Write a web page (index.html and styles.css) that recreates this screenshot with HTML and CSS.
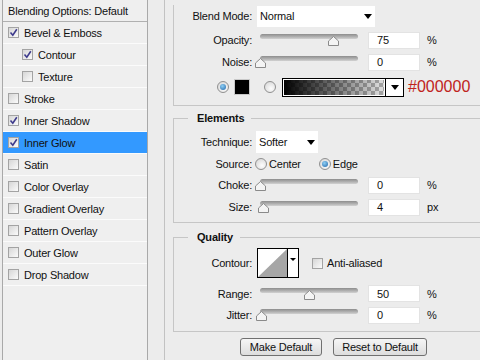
FILE: index.html
```html
<!DOCTYPE html>
<html lang="en">
<head>
    <meta charset="UTF-8">
    <title>Layer Style - Inner Glow</title>
    <link rel="stylesheet" href="styles.css">
</head>
<body>
    <div class="dialog">
        <ul class="styles-list">
            <li class="list-head">Blending Options: Default</li>
            <li><span class="check on"><svg viewBox="0 0 9 9"><path d="M1.5 4.5 L3.8 7.2 L7.8 1.2"/></svg></span>Bevel &amp; Emboss</li>
            <li class="sub"><span class="check on"><svg viewBox="0 0 9 9"><path d="M1.5 4.5 L3.8 7.2 L7.8 1.2"/></svg></span>Contour</li>
            <li class="sub"><span class="check"></span>Texture</li>
            <li><span class="check"></span>Stroke</li>
            <li><span class="check on"><svg viewBox="0 0 9 9"><path d="M1.5 4.5 L3.8 7.2 L7.8 1.2"/></svg></span>Inner Shadow</li>
            <li class="selected"><span class="check on"><svg viewBox="0 0 9 9"><path d="M1.5 4.5 L3.8 7.2 L7.8 1.2"/></svg></span>Inner Glow</li>
            <li><span class="check"></span>Satin</li>
            <li><span class="check"></span>Color Overlay</li>
            <li><span class="check"></span>Gradient Overlay</li>
            <li><span class="check"></span>Pattern Overlay</li>
            <li><span class="check"></span>Outer Glow</li>
            <li><span class="check"></span>Drop Shadow</li>
        </ul>

        <div class="pane">
            <!-- Structure (top is scrolled off) -->
            <div class="group group-top">
                <div class="row row-blend">
                    <span class="label">Blend Mode:</span>
                    <div class="select select-blend"><span>Normal</span><i class="arrow"></i></div>
                </div>
                <div class="row row-opacity">
                    <span class="label">Opacity:</span>
                    <div class="slider">
                        <div class="track"></div>
                        <svg class="thumb" style="left: calc(75% - 5.5px)" viewBox="0 0 11 10"><polygon points="0.5,9.5 0.5,5 5.5,0.5 10.5,5 10.5,9.5"/></svg>
                    </div>
                    <div class="num">75</div>
                    <span class="unit">%</span>
                </div>
                <div class="row">
                    <span class="label">Noise:</span>
                    <div class="slider">
                        <div class="track"></div>
                        <svg class="thumb" style="left: calc(0% - 5.5px)" viewBox="0 0 11 10"><polygon points="0.5,9.5 0.5,5 5.5,0.5 10.5,5 10.5,9.5"/></svg>
                    </div>
                    <div class="num">0</div>
                    <span class="unit">%</span>
                </div>
                <div class="row row-color">
                    <span class="radio on"></span>
                    <span class="swatch"></span>
                    <span class="radio radio-grad"></span>
                    <div class="gradient"></div>
                    <div class="grad-arrow"><i class="arrow"></i></div>
                    <span class="hex">#000000</span>
                </div>
            </div>

            <fieldset class="group group-elements">
                <legend>Elements</legend>
                <div class="row">
                    <span class="label">Technique:</span>
                    <div class="select select-tech"><span>Softer</span><i class="arrow"></i></div>
                </div>
                <div class="row row-source">
                    <span class="label">Source:</span>
                    <span class="radio"></span><span class="opt">Center</span>
                    <span class="radio on radio-edge"></span><span class="opt">Edge</span>
                </div>
                <div class="row">
                    <span class="label">Choke:</span>
                    <div class="slider">
                        <div class="track"></div>
                        <svg class="thumb" style="left: calc(0% - 5.5px)" viewBox="0 0 11 10"><polygon points="0.5,9.5 0.5,5 5.5,0.5 10.5,5 10.5,9.5"/></svg>
                    </div>
                    <div class="num">0</div>
                    <span class="unit">%</span>
                </div>
                <div class="row">
                    <span class="label">Size:</span>
                    <div class="slider">
                        <div class="track"></div>
                        <svg class="thumb" style="left: calc(4% - 5.5px)" viewBox="0 0 11 10"><polygon points="0.5,9.5 0.5,5 5.5,0.5 10.5,5 10.5,9.5"/></svg>
                    </div>
                    <div class="num">4</div>
                    <span class="unit">px</span>
                </div>
            </fieldset>

            <fieldset class="group group-quality">
                <legend>Quality</legend>
                <div class="row row-contour">
                    <span class="label">Contour:</span>
                    <div class="contour">
                        <svg class="curve" viewBox="0 0 29 28"><polygon points="0,28 29,0 29,28"/></svg>
                        <div class="contour-arrow"><i class="arrow small"></i></div>
                    </div>
                    <span class="check check-aa"></span>
                    <span class="opt">Anti-aliased</span>
                </div>
                <div class="row row-range">
                    <span class="label">Range:</span>
                    <div class="slider">
                        <div class="track"></div>
                        <svg class="thumb" style="left: calc(50% - 5.5px)" viewBox="0 0 11 10"><polygon points="0.5,9.5 0.5,5 5.5,0.5 10.5,5 10.5,9.5"/></svg>
                    </div>
                    <div class="num">50</div>
                    <span class="unit">%</span>
                </div>
                <div class="row">
                    <span class="label">Jitter:</span>
                    <div class="slider">
                        <div class="track"></div>
                        <svg class="thumb" style="left: calc(2% - 5.5px)" viewBox="0 0 11 10"><polygon points="0.5,9.5 0.5,5 5.5,0.5 10.5,5 10.5,9.5"/></svg>
                    </div>
                    <div class="num">0</div>
                    <span class="unit">%</span>
                </div>
            </fieldset>

            <div class="buttons">
                <button class="btn btn-make">Make Default</button>
                <button class="btn btn-reset">Reset to Default</button>
            </div>
        </div>
    </div>
</body>
</html>
```

FILE: styles.css
```css
* {
    box-sizing: border-box;
}

body {
    margin: 0;
    background: #ececec;
    font-family: 'Liberation Sans', Arial, sans-serif;
    font-size: 11px;
    letter-spacing: -0.2px;
    color: #111;
}

.dialog {
    display: flex;
    width: 480px;
    height: 360px;
    overflow: hidden;
}

/* left list of layer styles */
.styles-list {
    flex: none;
    list-style: none;
    margin: 0 16px 0 2px;
    padding: 0;
    width: 146px;
    border-left: 1px solid #a9a9a9;
    border-right: 1px solid #a9a9a9;
    background: #efefef;
}

.styles-list li {
    height: 22px;
    display: flex;
    align-items: center;
    padding-left: 5px;
    border-bottom: 1px solid #fbfbfb;
}

.styles-list .list-head {
    border-bottom-color: #b0b0b0;
}

.styles-list .sub {
    padding-left: 19px;
}

.styles-list .selected {
    background: #3399ff;
}

.check {
    flex: none;
    width: 11px;
    height: 11px;
    margin-right: 5px;
    border: 1px solid #a3a3a3;
    background: linear-gradient(135deg, #d6d6d6, #fbfbfb);
    display: flex;
}

.check svg {
    width: 9px;
    height: 9px;
    fill: none;
    stroke: #3d3a8c;
    stroke-width: 1.6;
}

/* right pane */
.pane {
    flex: none;
    width: 316px;
    border-left: 1px solid #c2c2c2;
}

.group {
    width: 330px;
    margin: 0 0 0 8px;
    border: 1px solid #c6c6c6;
}

.group-top {
    border-top: none;
    padding-bottom: 7px;
}

fieldset.group {
    min-width: 0;
}

.group legend {
    margin-left: 14px;
    padding: 0 7px 0 9px;
    font-weight: bold;
    line-height: 14px;
}

.group-elements {
    margin-top: 5px;
    padding: 6px 0 4px 0;
}

.group-quality {
    margin-top: 7px;
    padding: 4px 0 5px 0;
}

.row {
    display: flex;
    align-items: center;
    height: 22px;
}

.row-blend {
    margin-top: 5px;
}

.row-opacity {
    margin-top: 2px;
}

.row-color {
    margin-top: 3px;
    padding-left: 43px;
}

.row-source {
    height: 21px;
}

.row-contour {
    height: 30px;
}

.row-range {
    margin-top: 5px;
    height: 21px;
}

.label {
    flex: none;
    width: 78px;
    margin-right: 5px;
    text-align: right;
}

/* dropdowns */
.select {
    display: flex;
    align-items: center;
    justify-content: space-between;
    background: #fff;
    padding: 0 3px 0 3px;
}

.select-blend {
    width: 118px;
    height: 21px;
}

.select-tech {
    width: 62px;
    height: 22px;
    margin-left: -1px;
}

.arrow {
    width: 0;
    height: 0;
    border-left: 4px solid transparent;
    border-right: 4px solid transparent;
    border-top: 5px solid #000;
}

.arrow.small {
    border-left-width: 3px;
    border-right-width: 3px;
    border-top-width: 3px;
}

/* sliders */
.slider {
    flex: none;
    position: relative;
    width: 98px;
    height: 14px;
    margin-left: 3px;
}

.track {
    margin-top: 1px;
    height: 5px;
    border-radius: 3px;
    background: linear-gradient(#8d8d8d, #b4b4b4 60%, #d2d2d2);
}

.thumb {
    position: absolute;
    top: 3px;
    width: 11px;
    height: 10px;
    fill: #f4f4f4;
    stroke: #8a8a8a;
    stroke-width: 1;
}

.num {
    flex: none;
    width: 52px;
    height: 17px;
    margin-left: 10px;
    padding-left: 8px;
    display: flex;
    align-items: center;
    background: #fff;
    border: 1px solid #e3e3e3;
}

.unit {
    margin-left: 7px;
}

/* radios */
.radio {
    flex: none;
    position: relative;
    width: 12px;
    height: 12px;
    border-radius: 50%;
    border: 1px solid #909090;
    background: radial-gradient(circle at 60% 65%, #fdfdfd, #d2d2d2);
}

.radio.on::after {
    content: '';
    position: absolute;
    left: 2px;
    top: 2px;
    width: 6px;
    height: 6px;
    border-radius: 50%;
    background: radial-gradient(circle at 40% 35%, #8fd0f5, #1f64a8);
}

.row-source .radio {
    margin-left: -2px;
    margin-right: 2px;
}

.row-source .radio-edge {
    margin-left: 18px;
}

.opt {
    white-space: nowrap;
}

/* colour / gradient picker */
.swatch {
    flex: none;
    width: 16px;
    height: 16px;
    margin-left: 5px;
    background: #000;
    border: 1px solid #c8c8c8;
}

.radio-grad {
    margin-left: 14px;
}

.gradient {
    flex: none;
    width: 104px;
    height: 19px;
    margin-left: 6px;
    border: 1px solid #000;
    box-shadow: inset 0 0 0 1px #fff;
    background:
        linear-gradient(to right, #000, rgba(0, 0, 0, 0.15) 95%),
        repeating-conic-gradient(#bdbdbd 0 25%, #fff 0 50%) 0 0 / 8px 8px;
}

.grad-arrow {
    flex: none;
    width: 19px;
    height: 19px;
    margin-left: -1px;
    border: 1px solid #000;
    background: #fff;
    display: flex;
    align-items: center;
    justify-content: center;
}

.hex {
    margin-left: 4px;
    font-size: 16px;
    letter-spacing: 0;
    color: #c0231c;
}

/* contour picker */
.contour {
    flex: none;
    display: flex;
    width: 42px;
    height: 30px;
    border: 1px solid #000;
    background: #fff;
}

.curve {
    width: 29px;
    height: 28px;
    fill: #a6a6a6;
}

.contour-arrow {
    flex: none;
    width: 11px;
    border-left: 1px solid #000;
    display: flex;
    justify-content: center;
    padding-top: 9px;
}

.check-aa {
    margin-left: 13px;
    margin-right: 4px;
}

/* bottom buttons */
.buttons {
    display: flex;
    gap: 11px;
    margin-top: 6px;
    padding-left: 75px;
}

.btn {
    height: 18px;
    padding: 0;
    border: 1px solid #707070;
    border-radius: 3px;
    background: linear-gradient(#f6f6f6, #dddddd);
    font-family: 'Liberation Sans', Arial, sans-serif;
    font-size: 11px;
    letter-spacing: -0.2px;
    color: #111;
}

.btn-make {
    width: 82px;
}

.btn-reset {
    width: 94px;
}
```
